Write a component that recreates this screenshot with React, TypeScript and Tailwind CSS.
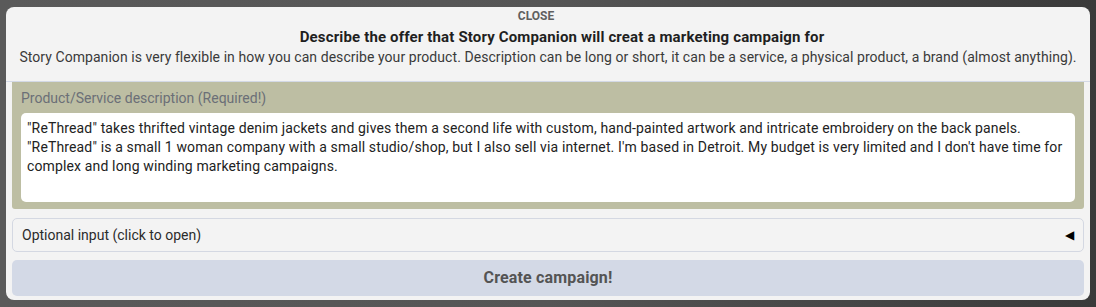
import { useState } from 'react';

const description =
  '"ReThread" takes thrifted vintage denim jackets and gives them a second life with custom, hand-painted artwork and intricate embroidery on the back panels.\n"ReThread" is a small 1 woman company with a small studio/shop, but I also sell via internet. I\'m based in Detroit. My budget is very limited and I don\'t have time for complex and long winding marketing campaigns.';

export default function App() {
  const [text, setText] = useState(description);
  const [open, setOpen] = useState(false);

  return (
    <div
      className="w-[1096px] h-[307px] overflow-hidden bg-[#575757] bg-gradient-to-r from-[#5a5a5a] via-[#555555] to-[#3a3a3a] pt-[7px] pl-[6px]"
      style={{ fontFamily: 'Roboto, "Liberation Sans", sans-serif' }}
    >
      <div className="w-[1084px] h-[293px] bg-[#f3f3f3] rounded-lg flex flex-col">
        {/* Header */}
        <div className="flex flex-col items-center border-b border-[#d3d9e6] pb-[14px]">
          <button className="text-[12px] font-bold text-[#5f5f5f] leading-[16px] mt-[1px] mr-[24px]">
            CLOSE
          </button>
          <h1 className="text-[15px] font-bold tracking-[0.01em] text-[#1f1f1f] leading-[20px] mt-[3px] ml-[28px]">
            Describe the offer that Story Companion will creat a marketing campaign for
          </h1>
          <p className="text-[14px] tracking-[0.06px] text-[#3a3a3a] leading-[20px]">
            Story Companion is very flexible in how you can describe your product. Description can be long or short, it can be a service, a physical product, a brand (almost anything).
          </p>
        </div>

        {/* Form */}
        <div className="px-[6px] flex flex-col">
          <div className="bg-[#bdbea3] rounded-b-[3px] px-[9px] pt-[6px] pb-[7px]">
            <label className="block text-[14px] text-[#6b6f77] leading-[20px] mb-[5px]">
              Product/Service description (Required!)
            </label>
            <textarea
              value={text}
              onChange={(e) => setText(e.target.value)}
              className="block w-full h-[89px] resize-none bg-white rounded-[5px] px-[6px] pt-[6px] pb-[4px] text-[14px] tracking-[0.01em] leading-[19px] text-[#222] outline-none"
            />
          </div>

          <button
            onClick={() => setOpen(!open)}
            className="mt-[9px] h-[34px] flex items-center justify-between border border-[#d4d8e2] rounded-[5px] px-[9px] text-[14px] text-[#2b2b2b] bg-[#f3f3f3]"
          >
            <span>Optional input (click to open)</span>
            <span className="text-[12px] text-black">{open ? '▼' : '◀'}</span>
          </button>

          <button className="mt-[8px] h-[36px] rounded-[5px] bg-[#d3d9e6] text-[16px] font-bold tracking-[0.01em] text-[#545454]">
            Create campaign!
          </button>
        </div>
      </div>
    </div>
  );
}
